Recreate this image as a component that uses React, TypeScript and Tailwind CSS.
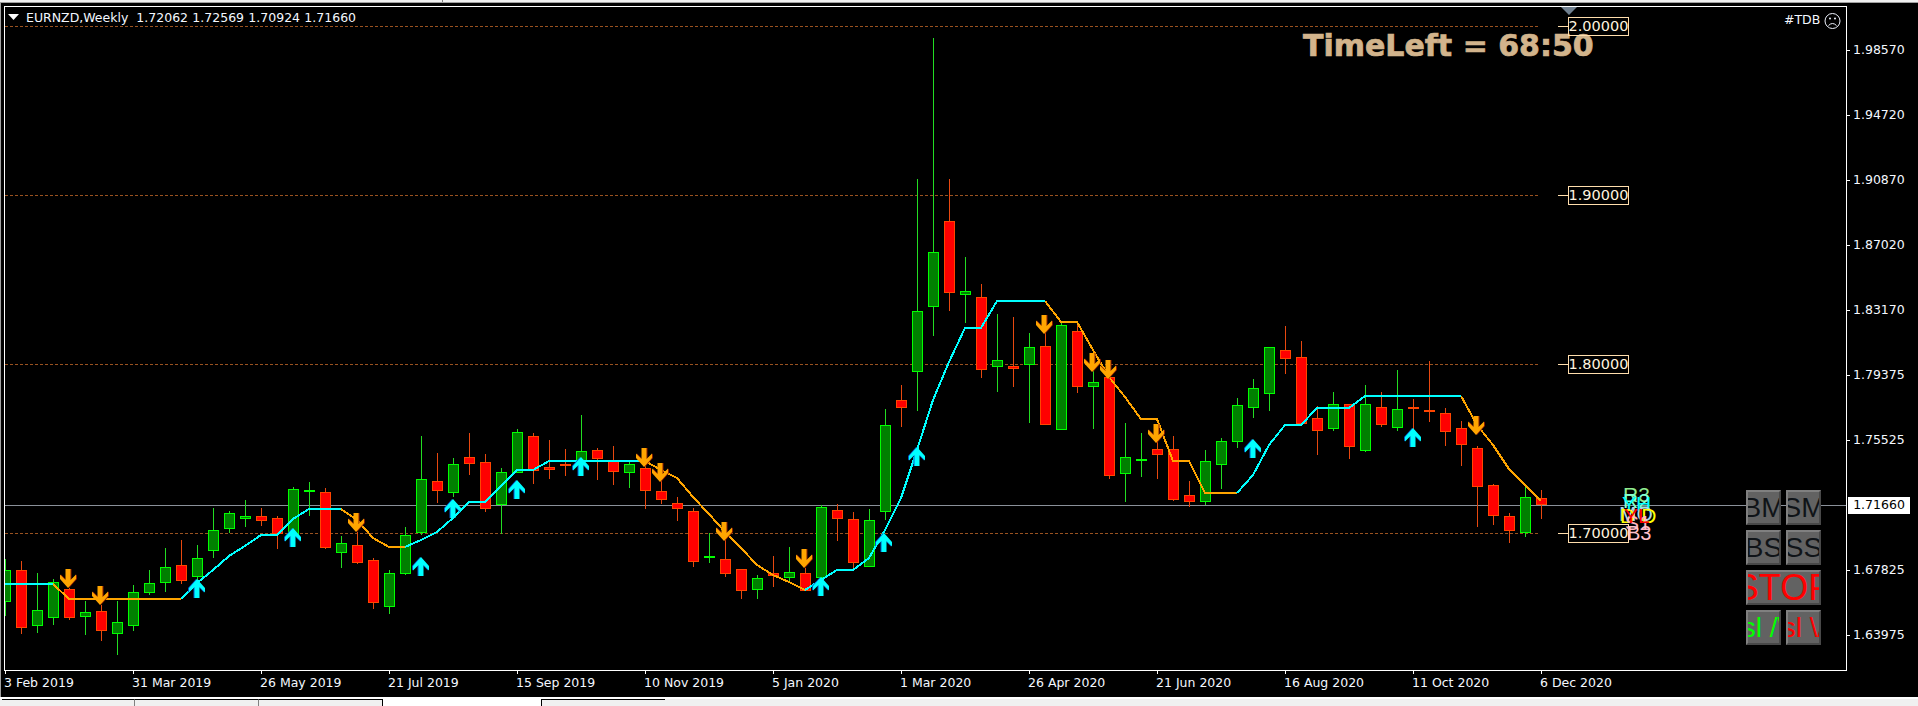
import React from "react";

type C = [string, number, number, number, number];
// kind, wick high, wick low, body top, body bottom; bar k sits at x = 5 + 16k
const candles: C[] = [
  ["g",559,616,570,602],["r",561,634,570,628],["g",573,633,610,626],["g",579,625,582,618],["r",588,620,589,618],
  ["g",601,635,612,617],["r",605,641,611,631],["g",601,655,622,634],["g",585,631,592,626],["g",570,595,583,593],
  ["g",548,592,567,583],["r",540,584,565,581],["g",545,583,558,577],["g",508,558,530,551],["g",511,533,513,529],
  ["g",500,527,516,519],["r",508,526,516,521],["r",516,549,518,534],["g",487,535,489,535],["g",482,516,490,492],
  ["r",488,549,492,548],["g",536,568,543,553],["r",532,564,545,563],["r",558,609,560,603],["g",570,614,573,607],
  ["g",527,575,535,574],["g",436,535,479,533],["r",453,503,481,491],["g",458,497,464,493],["r",433,475,457,464],
  ["r",454,512,462,509],["g",468,534,472,505],["g",429,473,432,473],["r",433,484,436,471],["r",440,479,467,470],
  ["r",449,476,464,466],["g",415,462,451,462],["r",448,480,450,459],["r",446,485,461,472],["g",462,488,464,473],
  ["r",458,509,468,491],["r",480,504,491,500],["r",497,521,503,509],["r",508,567,511,562],["g",533,563,556,558],
  ["r",527,577,559,574],["r",569,599,569,591],["g",575,599,578,590],["r",556,587,573,576],["g",547,582,572,578],
  ["r",568,591,573,591],["g",505,578,507,578],["r",504,541,510,519],["r",512,568,519,563],["g",509,567,520,567],
  ["g",409,520,425,512],["r",385,427,400,408],["g",179,411,311,372],["g",38,336,252,307],["r",179,311,221,293],
  ["g",257,323,291,295],["r",284,378,297,370],["g",314,392,360,367],["r",317,387,366,369],["g",333,423,347,365],
  ["r",333,425,346,425],["g",322,430,325,430],["r",322,393,331,387],["g",367,429,382,387],["r",367,479,377,476],
  ["g",423,502,457,474],["g",433,477,459,461],["r",431,479,449,455],["r",436,501,449,500],["r",481,507,495,502],
  ["g",450,505,461,502],["g",438,489,441,465],["g",398,448,405,442],["g",379,418,388,408],["g",347,411,347,394],
  ["r",326,374,350,359],["r",341,424,357,424],["r",406,455,418,431],["g",392,431,404,429],["r",404,459,404,447],
  ["g",385,452,404,451],["r",392,427,407,425],["g",370,431,409,428],["r",399,429,407,409],["r",361,422,410,412],
  ["r",408,446,413,432],["r",421,466,428,445],["r",446,527,448,487],["r",484,525,485,516],["r",513,543,516,531],
  ["g",487,537,497,533],["r",490,519,498,505],
];

const cyan: number[][] = [
  [[5,584],[53,584]],
  [[181,599],[197,583],[213,570],[229,556],[245,546],[261,535],[277,535],[293,519],[309,509],[341,509]],
  [[405,547],[421,540],[437,532],[453,518],[469,502],[485,502],[517,470],[533,470],[549,461],[645,461]],
  [[805,590],[821,580],[837,570],[853,570],[869,558],[885,530],[901,498],[917,450],[933,400],[949,362],[965,328],[981,328],[997,301],[1045,301]],
  [[1237,493],[1253,475],[1269,445],[1285,425],[1301,425],[1317,408],[1349,408],[1365,396],[1461,396]],
].map((s) => s.flat());

const orange: number[][] = [
  [[53,584],[69,599],[181,599]],
  [[341,509],[357,520],[373,538],[389,547],[405,547]],
  [[645,461],[661,470],[677,478],[693,497],[709,514],[725,532],[741,548],[757,565],[773,575],[789,582],[805,590]],
  [[1045,301],[1061,322],[1077,322],[1093,350],[1109,377],[1125,397],[1141,419],[1157,419],[1173,461],[1189,461],[1205,493],[1237,493]],
  [[1461,396],[1477,425],[1493,445],[1509,469],[1525,485],[1541,501]],
].map((s) => s.flat());

const downs = [[68,569],[100,586],[356,513],[644,448],[660,463],[724,522],[804,549],[1044,315],[1092,353],[1108,360],[1156,424],[1476,416]];
const ups = [[197,579],[293,528],[421,557],[453,499],[517,480],[581,457],[821,577],[884,533],[917,447],[1253,439],[1413,428]];
const arrow = "M8 0L16 9L16 13.5L10.5 8L10.5 19L5.5 19L5.5 8L0 13.5L0 9Z";

const levels = [26, 195, 364, 533];
const axis = ["1.98570","1.94720","1.90870","1.87020","1.83170","1.79375","1.75525","1.71660","1.67825","1.63975"];
const dates = ["3 Feb 2019","31 Mar 2019","26 May 2019","21 Jul 2019","15 Sep 2019","10 Nov 2019","5 Jan 2020","1 Mar 2020","26 Apr 2020","21 Jun 2020","16 Aug 2020","11 Oct 2020","6 Dec 2020"];

function Chart() {
  return (
    <svg width={1841} height={663} viewBox="5 7 1841 663" className="absolute left-0 top-0">
      {levels.map((y) => (
        <g key={y} shapeRendering="crispEdges">
          <line x1={5} x2={1538} y1={y + 0.5} y2={y + 0.5} stroke="#9a5220" strokeDasharray="3 2" />
          <rect x={1558} y={y} width={10} height={1} fill="#ffdead" />
        </g>
      ))}
      <rect x={5} y={505} width={1841} height={1} fill="#8a9099" />
      <g shapeRendering="crispEdges">
        {candles.map(([k, hi, lo, t, b], i) => {
          const x = 5 + 16 * i;
          const h = Math.max(b - t, 2);
          const edge = k === "g" ? "#00ff00" : "#ff4500";
          const wick = k === "g" ? "#22dd22" : "#e8480f";
          const fill = k === "g" ? "#008000" : "#ff0000";
          return (
            <g key={i}>
              <rect x={x} y={hi} width={1} height={lo - hi} fill={wick} />
              <rect x={x - 5} y={t} width={11} height={h} fill={edge} />
              {h > 2 && <rect x={x - 4} y={t + 1} width={9} height={h - 2} fill={fill} />}
            </g>
          );
        })}
      </g>
      <g fill="none" strokeWidth={2} shapeRendering="crispEdges">
        {orange.map((p, i) => <polyline key={i} points={p.join(" ")} stroke="#ffa500" />)}
        {cyan.map((p, i) => <polyline key={i} points={p.join(" ")} stroke="#00ffff" />)}
      </g>
      {downs.map(([x, y]) => (
        <g key={x}>
          <path d={arrow} transform={`translate(${x - 7} ${y + 19}) scale(1 -1)`} fill="#8b1a00" />
          <path d={arrow} transform={`translate(${x - 8} ${y + 19}) scale(1 -1)`} fill="#ffa500" />
        </g>
      ))}
      {ups.map(([x, y]) => (
        <g key={x}>
          <path d={arrow} transform={`translate(${x - 9} ${y})`} fill="#0058c8" />
          <path d={arrow} transform={`translate(${x - 8} ${y})`} fill="#00ffff" />
        </g>
      ))}
      <polygon points="8,14 19,14 13.5,20" fill="#ffffff" />
      <polygon points="1561,7 1577,7 1569,15" fill="#708090" />
      <g fill="none" stroke="#f0f4ff" strokeWidth={1}>
        <circle cx={1832.5} cy={21} r={7.5} />
        <path d="M1828.5 25.5Q1832.5 21.5 1836.5 25.5" />
      </g>
      <circle cx={1830} cy={18.5} r={1} fill="#f0f4ff" />
      <circle cx={1835} cy={18.5} r={1} fill="#f0f4ff" />
    </svg>
  );
}

function Btn({ text, cls }: { text: string; cls: string }) {
  return (
    <div className={`flex items-center justify-center overflow-hidden border-2 border-t-[#808080] border-l-[#808080] border-b-[#484848] border-r-[#484848] bg-[#626262] ${cls}`}>
      <span className="shrink-0 whitespace-pre">{text}</span>
    </div>
  );
}

function Level({ text, cls }: { text: string; cls: string }) {
  return (
    <div className={`absolute left-[1563px] flex h-[19px] w-[61px] items-center justify-center border border-[#ffdead] text-[14.5px] text-[#fff3df] ${cls}`}>
      {text}
    </div>
  );
}

export default function App() {
  return (
    <div className="flex h-[706px] w-[1918px] flex-col overflow-hidden bg-[#f0f0f0] font-['DejaVu_Sans',sans-serif] text-[12.5px] leading-none text-[#f4f8ff]">
      <div className="flex h-[2px] justify-start pl-[442px]">
        <div className="h-[2px] w-px bg-[#808080]" />
      </div>
      <div className="flex h-[695px] flex-col border-t border-l border-[#a0a0a0] bg-black">
        <div className="flex pl-[3px] pt-[3px]">
          <div className="relative h-[665px] w-[1843px] shrink-0 overflow-hidden border border-white bg-black">
            <Chart />
            <div className="absolute left-[21px] top-[5px] flex gap-[4.3px] whitespace-nowrap">
              <span className="mr-[3.7px]">EURNZD,Weekly</span>
              <span>1.72062</span>
              <span>1.72569</span>
              <span>1.70924</span>
              <span>1.71660</span>
            </div>
            <div className="absolute left-[1779px] top-[7px]">#TDB</div>
            <div className="absolute left-[1298px] top-[24px] whitespace-nowrap text-[30px] font-bold text-[#d2b48c] [-webkit-text-stroke:0.7px_#d2b48c]">TimeLeft = 68:50</div>
            <Level text="2.00000" cls="top-[10px]" />
            <Level text="1.90000" cls="top-[179px]" />
            <Level text="1.80000" cls="top-[348px]" />
            <Level text="1.70000" cls="top-[517px]" />
            <div className="font-['Liberation_Sans',sans-serif] text-[21px]">
              <span className="absolute left-[1618px] top-[477px] text-[#90ee90]">R3</span>
              <span className="absolute left-[1618px] top-[483px] text-[#7fffd4]">R2</span>
              <span className="absolute left-[1617px] top-[486px] text-[#00ffff]">YH</span>
              <span className="absolute left-[1614px] top-[496px] text-[#add8e6]">MO</span>
              <span className="absolute left-[1615px] top-[498px] tracking-[6px] text-[#ffff00]">DD</span>
              <span className="absolute left-[1620px] top-[505px] text-[#ffb6c1]">S1</span>
              <span className="absolute left-[1619px] top-[498px] text-[#ff0000]">YL</span>
              <span className="absolute left-[1622px] top-[516px] text-[20px] text-[#ffc0cb]">B3</span>
            </div>
            <div className="absolute left-[1741px] top-[483px] grid grid-cols-[35px_35px] grid-rows-[35px_35px_35px_35px] gap-[5px] font-['Liberation_Sans',sans-serif] text-[28px]">
              <Btn text="BM" cls="text-[#101418]" />
              <Btn text="SM" cls="text-[#101418]" />
              <Btn text="BS" cls="text-[#101418]" />
              <Btn text="SS" cls="text-[#101418]" />
              <Btn text="STOP" cls="col-span-2 text-[36px] text-[#ff0000]" />
              <Btn text="sl /\" cls="text-[#00ff00]" />
              <Btn text="sl \/" cls="text-[#ff0000]" />
            </div>
          </div>
          <div className="flex h-[665px] flex-1 flex-col pt-[12px]">
            {axis.map((v) =>
              v === "1.71660" ? (
                <div key={v} className="flex h-[65px] items-center pl-px">
                  <div className="flex h-[17px] w-[62px] items-center justify-center bg-white text-black">{v}</div>
                </div>
              ) : (
                <div key={v} className="flex h-[65px] items-center gap-[3px]">
                  <div className="h-px w-[3px] bg-white" />
                  <span>{v}</span>
                </div>
              ),
            )}
          </div>
        </div>
        <div className="flex h-[26px] pl-[4px]">
          {dates.map((d) => (
            <div key={d} className="flex w-[128px] shrink-0 flex-col">
              <div className="h-[3px] w-px bg-white" />
              <span className="-ml-px mt-[3px] whitespace-nowrap">{d}</span>
            </div>
          ))}
        </div>
      </div>
      <div className="h-[2px] bg-white" />
      <div className="flex h-[7px] pl-[2px]">
        <div className="h-[7px] w-[133px] border-t border-r border-t-black border-r-[#808080]" />
        <div className="h-[7px] w-[124px] border-t border-r border-t-black border-r-[#808080]" />
        <div className="h-[7px] w-[124px] border-t border-r border-black" />
        <div className="h-[7px] w-[158px] bg-white" />
        <div className="h-[7px] w-[124px] border-t border-l border-black" />
      </div>
    </div>
  );
}
